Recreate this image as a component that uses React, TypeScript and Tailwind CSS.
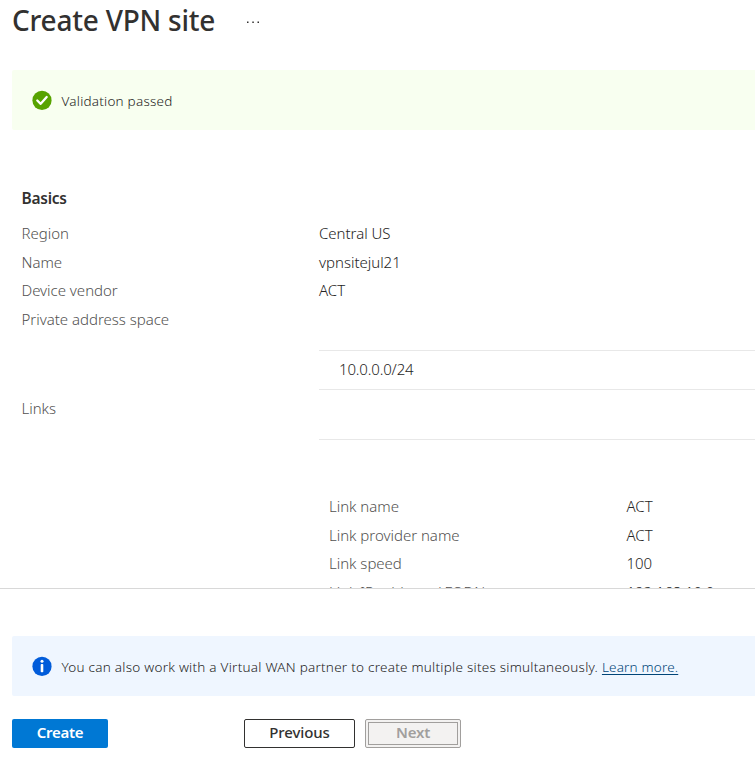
import type { ReactNode } from "react";

function Row({ label, value }: { label: string; value?: ReactNode }) {
  return (
    <div className="flex h-[28.6px] shrink-0 items-center whitespace-nowrap">
      <span className="w-[297.5px] shrink-0 text-[#525150]">{label}</span>
      <span className="text-[#252423]">{value}</span>
    </div>
  );
}

function CheckIcon() {
  return (
    <svg width="20" height="20" viewBox="0 0 20 20" className="shrink-0">
      <circle cx="10" cy="10.4" r="9.6" fill="#57a300" />
      <path d="M5.3 10.5 L8.7 13.8 L14.7 7" fill="none" stroke="#fff" strokeWidth="2.3" strokeLinecap="round" strokeLinejoin="round" />
    </svg>
  );
}

function InfoIcon() {
  return (
    <svg width="20" height="20" viewBox="0 0 20 20" className="shrink-0">
      <circle cx="10" cy="10.4" r="9.6" fill="#015cda" />
      <circle cx="10" cy="5.3" r="1.5" fill="#fff" />
      <rect x="8.7" y="8.1" width="2.6" height="8.2" rx="0.8" fill="#fff" />
    </svg>
  );
}

export default function App() {
  return (
    <div className="flex h-[757px] w-[755px] flex-col overflow-hidden bg-white font-['Noto_Sans','Open_Sans',sans-serif] text-[15px] font-[350] tracking-[-0.02px]">
      <header className="flex h-[70px] shrink-0 items-start pl-3 text-[#323130]">
        <h1 className="w-[234px] whitespace-nowrap text-[28px] leading-[41px] font-medium tracking-[-0.22px]">Create VPN site</h1>
        <svg width="14" height="4" viewBox="0 0 14 4" className="mt-5" fill="#323130">
          <rect x="1" y="1.5" width="1.5" height="1.5" />
          <rect x="6.3" y="1.5" width="1.5" height="1.5" />
          <rect x="11.5" y="1.5" width="1.5" height="1.5" />
        </svg>
      </header>

      <div className="ml-3 flex h-[60px] shrink-0 items-center gap-[9.5px] rounded-l-[2px] bg-[#f8fff0] pl-5 text-[13.5px] tracking-[0.22px] text-[#252423]">
        <CheckIcon />
        <span className="pt-[2px]">Validation passed</span>
      </div>

      <main className="flex h-[458px] shrink-0 flex-col overflow-hidden pt-[56px] pl-[21.5px]">
        <h2 className="h-[33.1px] shrink-0 text-[15.5px] leading-6 font-semibold tracking-[-0.25px] text-[#323130]">Basics</h2>
        <Row label="Region" value="Central US" />
        <Row label="Name" value="vpnsitejul21" />
        <Row label="Device vendor" value="ACT" />
        <Row label="Private address space" />
        <div className="mt-[16.5px] ml-[297.5px] flex h-10 shrink-0 items-center border-y border-[#e8e8e8] pb-px pl-5 tracking-[-0.15px] text-[#252423]">10.0.0.0/24</div>
        <div className="mt-[4px] shrink-0">
          <Row label="Links" />
        </div>
        <div className="mt-[16.4px] ml-[297.5px] shrink-0 border-t border-[#e8e8e8] pt-[52.2px] pl-[10px]">
          <Row label="Link name" value="ACT" />
          <Row label="Link provider name" value="ACT" />
          <Row label="Link speed" value="100" />
          <Row label="Link IP address / FQDN" value="192.168.10.0" />
        </div>
      </main>

      <footer className="shrink-0 border-t border-[#d8d8d8] pt-[47px] pl-3">
        <div className="flex h-[60px] items-center gap-[9.5px] rounded-l-[2px] bg-[#eff6ff] pl-5 text-[13.5px] tracking-[0.25px] text-[#252423]">
          <InfoIcon />
          <p className="whitespace-nowrap pt-[2px]">
            <span>You can also work with a Virtual WAN partner to create multiple sites simultaneously.</span>{" "}
            <a className="text-[#004578] underline underline-offset-2 tracking-[0.18px]">Learn more.</a>
          </p>
        </div>
        <div className="mt-[23px] flex h-[29px] text-[15px] font-semibold">
          <button className="w-24 rounded-[2px] bg-[#0078d4] pb-0.5 tracking-[-0.25px] text-white">Create</button>
          <button className="ml-[136px] w-[111px] rounded-[2px] border border-[#323130] bg-white pb-0.5 font-medium tracking-[-0.1px] text-[#323130]">Previous</button>
          <button className="ml-[10px] w-24 rounded-[2px] border border-[#a19f9d] bg-[#f3f2f1] p-[2px] tracking-[-0.2px] text-[#a19f9d]">
            <span className="flex h-full items-center justify-center border border-[#a19f9d] pb-0.5">Next</span>
          </button>
        </div>
      </footer>
    </div>
  );
}
